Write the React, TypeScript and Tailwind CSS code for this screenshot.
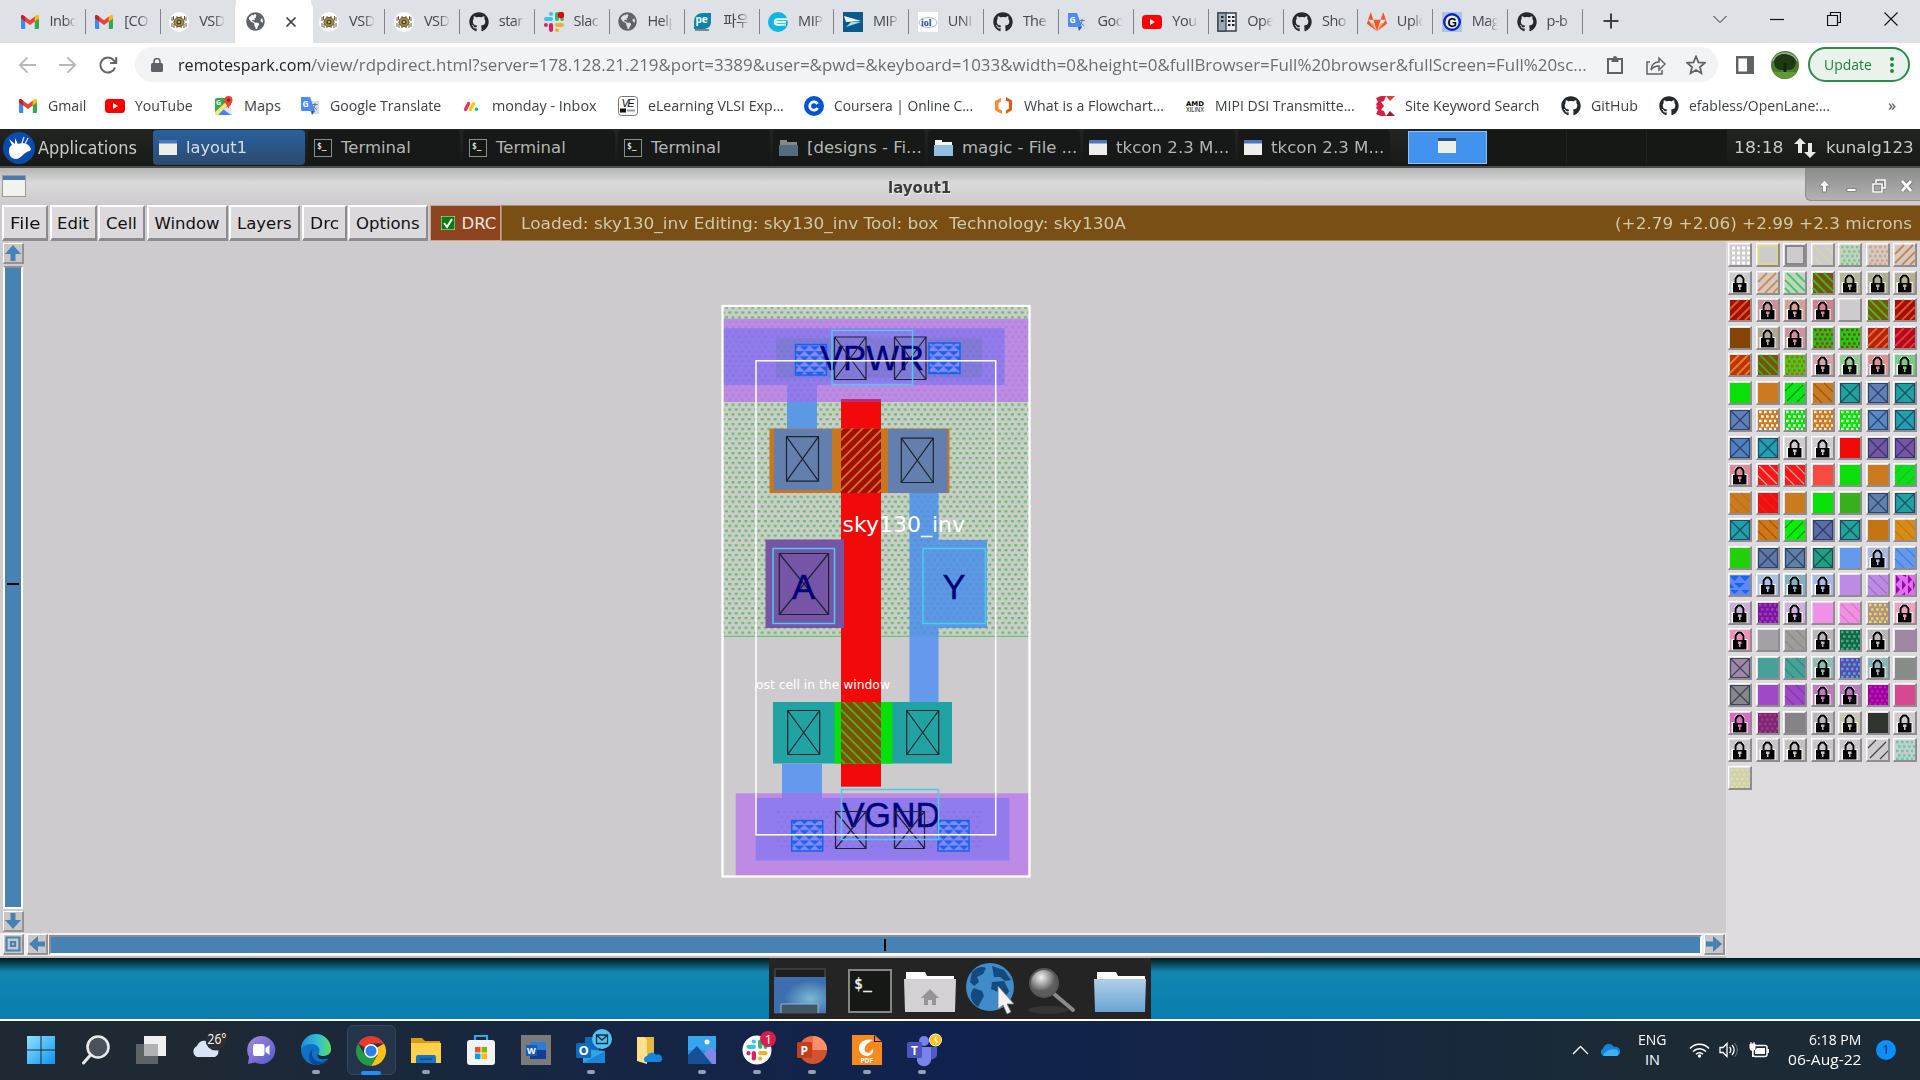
import React, { useLayoutEffect, useRef, useState } from "react";
import { FaGithub, FaGlobeAmericas, FaGitlab } from "react-icons/fa";

const UI = "font-['Open_Sans','Noto_Sans_CJK_KR',sans-serif]";
const DJ = "font-['DejaVu_Sans',sans-serif]";

/* Text squeezed or stretched horizontally to fill the width of its box. */
function Fit({ children, className = "" }: { children: string; className?: string }) {
  const box = useRef<HTMLSpanElement>(null);
  const ref = useRef<HTMLSpanElement>(null);
  const [k, setK] = useState(1);
  useLayoutEffect(() => {
    if (box.current && ref.current) setK(box.current.clientWidth / ref.current.offsetWidth);
  }, [children]);
  return (
    <span ref={box} className={"block shrink-0 whitespace-pre " + className}>
      <span ref={ref} className="inline-block origin-left" style={{ transform: `scaleX(${k})` }}>
        {children}
      </span>
    </span>
  );
}

function Svg({ children, c = "size-5", vb = "0 0 20 20" }: { children: React.ReactNode; c?: string; vb?: string }) {
  return (
    <svg viewBox={vb} className={"block shrink-0 " + c}>
      {children}
    </svg>
  );
}

const slackPaths = (
  <>
    <g fill="#36c5f0"><rect x="0" y="5" width="9" height="4" rx="2" /><rect x="5" y="0" width="4" height="3.800" rx="1.900" /></g>
    <g fill="#2eb67d"><rect x="11" y="0" width="4" height="9" rx="2" /><rect x="16.2" y="5" width="3.8" height="4" rx="1.9" /></g>
    <g fill="#ecb22e"><rect x="11" y="11" width="9" height="4" rx="2" /><rect x="11" y="16.2" width="4" height="3.8" rx="1.9" /></g>
    <g fill="#e01e5a"><rect x="5" y="11" width="4" height="9" rx="2" /><rect x="0" y="11" width="3.8" height="4" rx="1.9" /></g>
  </>
);

function Ico({ n }: { n: string }) {
  switch (n) {
    case "gmail":
      return (
        <Svg>
          <path d="M1 5v11a1.200 1.200 0 0 0 1.200 1H5.200V8z" fill="#4285f4" />
          <path d="M19 5v11a1.200 1.200 0 0 1-1.200 1H14.800V8z" fill="#34a853" />
          <path d="M14.800 4.600 17 3.100c1-.6 2 .2 2 1.300v2L14.800 9.500z" fill="#fbbc04" />
          <path d="M1 6.400V4.400c0-1.200 1.200-1.900 2.100-1.200L10 8.200l4.800-3.600v4.900L10 13.100 5.200 9.500z" fill="#ea4335" />
          <path d="M1 6.400V4.400c0-1.200 1.200-1.900 2.100-1.200l2.100 1.500v4.800z" fill="#c5221f" />
        </Svg>
      );
    case "vsd":
      return (
        <Svg>
          <circle cx="10" cy="10" r="10" fill="#fff" />
          <g stroke="#6b5a3a" strokeWidth="1"><path d="M3 5v4M4.500 4v4M17 5v4M15.500 4v4M3 11v4M5 12v4M17 11v4M15 12v4M8 4v12M12 4v12" /></g>
          <ellipse cx="10" cy="10" rx="5" ry="4.500" fill="#c88a35" stroke="#5a482c" />
          <circle cx="10" cy="10" r="2.600" fill="#1e5b50" />
          <circle cx="10" cy="10" r="1.100" fill="#ffd24a" />
        </Svg>
      );
    case "globe":
      return <FaGlobeAmericas className="size-[19px] shrink-0 text-[#5f6368]" />;
    case "github":
      return <FaGithub className="size-5 shrink-0 text-[#24292f]" />;
    case "slack":
      return <Svg>{slackPaths}<circle cx="17" cy="3" r="3.300" fill="#eb0000" /></Svg>;
    case "pe":
      return (
        <Svg>
          <path d="M1 10C1 4 5 1 10 1h8v9c0 5-4 7-8 7H1z" fill="#0b86a8" />
          <text x="2.500" y="11" fontSize="10" fontWeight="700" fill="#fff" fontFamily="Open Sans">pe</text>
          <path d="M2 18h14" stroke="#666" strokeWidth="1.500" />
        </Svg>
      );
    case "e":
      return <Svg><circle cx="10" cy="10" r="10" fill="#12b5e0" /><path d="M20 7.200H9.500a2.800 2.800 0 0 0 0 5.600H18M6 10h12" stroke="#dff" strokeWidth="2" fill="none" /></Svg>;
    case "mip":
      return <Svg><rect width="20" height="20" fill="#0b5a8e" /><path d="M1 4 18 9 3 10z" fill="#fff" /><path d="m3 15 15-5-10 0z" fill="#9fe0f5" /></Svg>;
    case "iol":
      return (
        <Svg><rect width="20" height="20" fill="#fff" /><ellipse cx="10" cy="10.500" rx="9" ry="5" fill="none" stroke="#9db6dd" /><text x="3" y="14" fontSize="10" fontFamily="Liberation Serif" fontWeight="700" fill="#2b4a9b">iol</text></Svg>
      );
    case "trans":
      return (
        <Svg>
          <path d="M7 5h11a1 1 0 0 1 1 1v11a1 1 0 0 1-1 1H11z" fill="#dadce0" />
          <path d="M1 1h9l5 14H2.500A1.500 1.500 0 0 1 1 13.500z" fill="#4c8bf5" />
          <path d="m11 15h4l-3 4z" fill="#2a56c6" />
          <text x="2.500" y="11" fontSize="8.500" fontWeight="700" fill="#fff" fontFamily="Open Sans">G</text>
          <path d="M12.500 8.500h5M15 7v1.500c0 2-1 4-2.500 5M13.500 10c.5 1.500 2 3 3.500 3.500" stroke="#607d8b" fill="none" />
        </Svg>
      );
    case "yt":
      return <Svg><rect y="3" width="20" height="14" rx="3.500" fill="#f00" /><path d="m8 7 5 3-5 3z" fill="#fff" /></Svg>;
    case "ope":
      return (
        <Svg><rect x="1" y="1" width="18" height="18" fill="#e8eef2" stroke="#3e4a54" strokeWidth="1.600" /><rect x="1" y="1" width="8" height="18" fill="#9aa9b3" stroke="#3e4a54" strokeWidth="1.400" /><path d="M4 5h2.500M4 9h2.500M11 5h2.500M15 5h2.500M11 9h2.500M15 9h2.500M11 13h2.500M15 13h2.500" stroke="#222" strokeWidth="2" /></Svg>
      );
    case "gitlab":
      return (
        <div className="relative shrink-0">
          <FaGitlab className="size-5 text-[#f0562b]" />
          <Svg c="absolute left-0 top-0 size-5"><path d="M2.500 11 10 18l7.500-7-3.500 0-4 7-4-7z" fill="#fc9a2a" opacity=".75" /></Svg>
        </div>
      );
    case "g":
      return <Svg><rect width="20" height="20" fill="#a8c6e0" /><circle cx="10" cy="10" r="7.800" fill="#e8eef8" stroke="#1020c8" strokeWidth="2.400" /><text x="5.500" y="14.500" fontSize="12" fontWeight="700" fontFamily="Liberation Sans" fill="#000">G</text></Svg>;
    case "maps":
      return (
        <Svg>
          <rect x="1" y="2" width="16" height="17" rx="2" fill="#34a853" /><path d="m1 19 9-10 8 10z" fill="#4285f4" /><path d="M1 16 14 4l2 3L4 19H1z" fill="#fbe27a" /><path d="m9 13 8 6V9z" fill="#dfe3e8" />
          <path d="M14.500 0a4 4 0 0 0-4 4c0 3.500 3 4.500 4 9 1-4.500 4-5.500 4-9a4 4 0 0 0-4-4z" fill="#ea4335" /><circle cx="14.500" cy="4" r="1.500" fill="#8a1d14" />
          <text x="2" y="8.500" fontSize="7" fontWeight="700" fill="#fff" fontFamily="Open Sans">G</text>
        </Svg>
      );
    case "monday":
      return <Svg><path d="m3.500 13.500 3-6" stroke="#fb275d" strokeWidth="3.200" strokeLinecap="round" /><path d="m8.500 13.500 3-6" stroke="#fc0" strokeWidth="3.200" strokeLinecap="round" /><circle cx="14.500" cy="13.300" r="1.800" fill="#00ca72" /></Svg>;
    case "le":
      return <Svg><rect x=".5" y=".5" width="19" height="19" rx="3" fill="#fff" stroke="#777" /><text x="3.500" y="11" fontSize="11" fontStyle="italic" fontFamily="Liberation Sans" fill="#111" textLength="13">VE</text><rect x="2" y="12.500" width="6" height="4" fill="#111" /><path d="M9 14.500h8" stroke="#999" strokeWidth="2" /></Svg>;
    case "coursera":
      return <Svg><circle cx="10" cy="10" r="10" fill="#0056d2" /><path d="M13.600 8a4.200 4.200 0 1 0 0 4" stroke="#fff" strokeWidth="2.800" fill="none" /></Svg>;
    case "flow":
      return <Svg><path d="M7 2 1 5v9l3 2 4 2v-3.500l-3.500-2V7L7 5.500z" fill="#f9892b" /><path d="m12 1 6 3.500V14l-6 4v-3.500l3-2V6l-3-1.500z" fill="#e8590c" /></Svg>;
    case "amd":
      return <Svg><text x="1" y="9.500" fontSize="6.500" fontWeight="700" fontFamily="DejaVu Sans" textLength="18" lengthAdjust="spacingAndGlyphs">AMD</text><text x="1" y="16" fontSize="7" fontFamily="Liberation Sans" textLength="18" lengthAdjust="spacingAndGlyphs">XILINX</text></Svg>;
    case "site":
      return <Svg><path d="M1 2 6 0h5L9 5 6 6l3 4-3 4 3 1 2 5H6l-5-2 2-4-2-2 1-2-1-2 2-2z" fill="#d7203f" /><path d="M11 20h9l-5-5z" fill="#a3162f" /><path d="m11 0h9l-5 5z" fill="#ee3a33" /></Svg>;
    default:
      return null;
  }
}

const tabs: [string, string][] = [
  ["gmail", "Inbo"], ["gmail", "[CO"], ["vsd", "VSD"], ["globe", "*"], ["vsd", "VSD"], ["vsd", "VSD"], ["github", "star"],
  ["slack", "Slac"], ["globe", "Help"], ["pe", "파우"], ["e", "MIP"], ["mip", "MIP"], ["iol", "UNI"], ["github", "The"],
  ["trans", "Goo"], ["yt", "You"], ["ope", "Ope"], ["github", "Sho"], ["gitlab", "Uplo"], ["g", "Mag"], ["github", "p-b"],
];

function TabStrip() {
  return (
    <div className="flex h-[43px] bg-[#dee1e6] pl-[11px]">
      {tabs.map(([ic, t], i) =>
        t === "*" ? (
          <div key={i} className="relative flex h-[43px] w-[75px] shrink-0 items-center bg-white pl-[10px]">
            <div className="absolute -left-px top-0 h-[43px] w-[78px] rounded-t-[9px] bg-white" />
            <div className="relative flex items-center">
              <Ico n={ic} />
              <Svg c="ml-5 size-3" vb="0 0 12 12"><path d="m1.500 1.500 9 9m0-9-9 9" stroke="#3c4043" strokeWidth="1.700" /></Svg>
            </div>
          </div>
        ) : (
          <div key={i} className="flex h-[43px] w-[74.850px] shrink-0 items-center pl-[8.500px]">
            <Ico n={ic} />
            <div className="ml-[10px] w-[26px] overflow-hidden whitespace-nowrap pb-px text-[14.500px] leading-5 tracking-[-0.500px] text-[#45494d] [mask-image:linear-gradient(to_right,#000_60%,transparent)]">
              {t}
            </div>
            {i !== 2 && <div className="ml-auto h-[25px] w-px bg-[#808489]" />}
          </div>
        ),
      )}
      <Svg c="mt-[13px] ml-[20px] size-4" vb="0 0 16 16"><path d="M8 .5v15M.5 8h15" stroke="#3c4043" strokeWidth="2" /></Svg>
      <div className="ml-auto flex h-[37px] items-center gap-[43px] pr-[22px]">
        <Svg c="size-[14px]" vb="0 0 14 14"><path d="m.5 4 6.500 6.500L13.500 4" fill="none" stroke="#222" /></Svg>
        <Svg c="size-[14px]" vb="0 0 14 14"><path d="M0 7.500h14" stroke="#111" strokeWidth="1.200" /></Svg>
        <Svg c="size-[14px]" vb="0 0 14 14"><path d="M.5 3.500h10v10H.5zM3.500 3.500v-3h10v10h-3" fill="none" stroke="#111" strokeWidth="1.200" /></Svg>
        <Svg c="size-[14px]" vb="0 0 14 14"><path d="m.5.5 13 13m0-13-13 13" stroke="#111" strokeWidth="1.100" /></Svg>
      </div>
    </div>
  );
}

function AddressBar() {
  return (
    <div className="flex h-[43px] items-center bg-white pl-[18px]">
      <Svg c="h-5 w-[19px]"><path d="M19 10H2m8-8-8 8 8 8" fill="none" stroke="#b6b8bb" strokeWidth="2" /></Svg>
      <Svg c="ml-[21px] h-5 w-[19px]"><path d="M1 10h17m-8-8 8 8-8 8" fill="none" stroke="#b6b8bb" strokeWidth="2" /></Svg>
      <Svg c="ml-[21px] size-5"><path d="M17 12.500A7.500 7.500 0 1 1 15.500 5l2 2M18.200 2v6h-6" fill="none" stroke="#5f6368" strokeWidth="2" /></Svg>
      <div className="ml-[17px] flex h-[35px] w-[1583px] items-center rounded-full bg-[#f1f3f4] pl-4">
        <Svg c="h-[14px] w-3" vb="0 0 12 14"><rect y="5" width="12" height="9" rx="1.500" fill="#5f6368" /><path d="M3 6V3.500a3 3 0 0 1 6 0V6" fill="none" stroke="#5f6368" strokeWidth="1.600" /></Svg>
        <Fit className="ml-[15px] w-[133px] text-[16.500px] leading-6 text-[#202124]">remotespark.com</Fit>
        <Fit className="w-[1276px] text-[16.500px] leading-6 text-[#6a6e73]">/view/rdpdirect.html?server=178.128.21.219&port=3389&user=&pwd=&keyboard=1033&width=0&height=0&fullBrowser=Full%20browser&fullScreen=Full%20sc...</Fit>
        <Svg c="ml-[20px] h-[18px] w-4" vb="0 0 16 18"><path d="M1 3h14v14H1z" fill="none" stroke="#5f6368" strokeWidth="2" /><path d="M4.500 2h7v4h-7z" fill="#5f6368" /><circle cx="8" cy="2" r="2" fill="#5f6368" /></Svg>
        <Svg c="ml-[23px] size-[20px]"><path d="M4 7H1v12h15v-4M5 15c.5-5 3-8 8-8V3l6 6-6 6v-4c-4 0-6 1-8 4z" fill="none" stroke="#5f6368" strokeWidth="1.500" /></Svg>
        <Svg c="ml-[20px] size-[20px]"><path d="m10 1.500 2.500 5.800 6.200.6-4.700 4.100 1.400 6.200L10 15l-5.400 3.200L6 12 1.300 7.900l6.200-.6z" fill="none" stroke="#5f6368" strokeWidth="1.800" /></Svg>
      </div>
      <Svg c="ml-[18px] h-[18px] w-[18px]" vb="0 0 18 18"><path d="M1.200 1.200h15.600v15.600H1.200z" fill="none" stroke="#5f6368" strokeWidth="2.400" /><path d="M11 1h6v16h-6z" fill="#5f6368" /></Svg>
      <Svg c="ml-[17px] size-7" vb="0 0 28 28">
        <circle cx="14" cy="14" r="14" fill="#4b7a2c" /><path d="M1 10a14 14 0 0 1 26 0z" fill="#8fae9a" /><path d="M3 10c1-4 5-7 10-7s10 2 12 7c0 6-3 9-8 9H9c-4-1-6-4-6-9z" fill="#1d3a14" /><path d="M14 12v9" stroke="#14240d" strokeWidth="3" /><path d="M2 21h24a14 14 0 0 1-24 0z" fill="#5f9a35" />
      </Svg>
      <div className="ml-[9px] flex h-[35px] w-[102px] items-center rounded-full border-2 border-[#2c8a4b] bg-[#e9f3ec] pl-[14px]">
        <Fit className="w-12 text-[14.500px] leading-5 text-[#1e7e3c]">Update</Fit>
        <Svg c="ml-[17px] h-4 w-[6px]" vb="0 0 6 16"><g fill="#1e8e3e"><circle cx="3" cy="2" r="2" /><circle cx="3" cy="8" r="2" /><circle cx="3" cy="14" r="2" /></g></Svg>
      </div>
    </div>
  );
}

const marks: [string, string, string, string][] = [
  ["gmail", "Gmail", "w-[87px]", "w-[38px]"],
  ["yt", "YouTube", "w-[109px]", "w-[58px]"],
  ["maps", "Maps", "w-[86px]", "w-[37px]"],
  ["trans", "Google Translate", "w-[162px]", "w-[111px]"],
  ["monday", "monday - Inbox", "w-[156px]", "w-[105px]"],
  ["le", "eLearning VLSI Exp...", "w-[186px]", "w-[136px]"],
  ["coursera", "Coursera | Online C...", "w-[190px]", "w-[139px]"],
  ["flow", "What is a Flowchart...", "w-[191px]", "w-[140px]"],
  ["amd", "MIPI DSI Transmitte...", "w-[190px]", "w-[140px]"],
  ["site", "Site Keyword Search", "w-[186px]", "w-[134px]"],
  ["github", "GitHub", "w-[98px]", "w-[47px]"],
  ["github", "efabless/OpenLane:...", "w-[200px]", "w-[141px]"],
];

function Bookmarks() {
  return (
    <div className="flex h-[43px] items-center bg-white pb-[4px] pl-[18px]">
      {marks.map(([ic, t, w, tw], i) => (
        <div key={i} className={"flex shrink-0 items-center gap-[10px] " + w}>
          <Ico n={ic} />
          <Fit className={"text-[14.500px] leading-5 text-[#3c4043] " + tw}>{t}</Fit>
        </div>
      ))}
      <span className="ml-auto mr-6 pb-0.5 text-[16px] leading-5 text-[#3c4043]">»</span>
    </div>
  );
}

function TaskIcon({ k }: { k: string }) {
  if (k === "term")
    return <Svg c="h-[18px] w-[18px]" vb="0 0 18 18"><rect x=".5" y=".5" width="17" height="17" fill="#151715" stroke="#8b8e8b" /><text x="3" y="9.500" fontSize="8" fontWeight="700" fontFamily="DejaVu Sans Mono" fill="#ddd">$_</text></Svg>;
  if (k === "folder" || k === "dim")
    return (
      <Svg c={"h-[16px] w-[19px] " + (k === "dim" ? "opacity-50" : "")} vb="0 0 19 16"><path d="M1 0h7v2h10v5H1z" fill="#f4f4f4" /><path d="M0 5h19v11H0z" fill="#8fbfe3" /></Svg>
    );
  return <Svg c="h-[15px] w-[18px]" vb="0 0 18 15"><rect width="18" height="15" fill="#efefea" /><rect width="18" height="3.500" fill="#4a78b8" /></Svg>;
}

const tasks: [string, string, string][] = [
  ["win", "layout1", "w-[61px]"], ["term", "Terminal", "w-[70px]"], ["term", "Terminal", "w-[70px]"], ["term", "Terminal", "w-[70px]"],
  ["dim", "[designs - Fi...", "w-[115px]"], ["folder", "magic - File ...", "w-[115px]"], ["win", "tkcon 2.3 M...", "w-[113px]"], ["win", "tkcon 2.3 M...", "w-[113px]"],
];

function Panel() {
  return (
    <div className={"flex h-[39px] items-center border-b-2 border-[#4b4d4b] bg-gradient-to-b from-[#232523] to-[#171917] text-[#b4b6b3] " + DJ}>
      <Svg c="ml-[3px] size-8" vb="0 0 32 32">
        <circle cx="16" cy="16" r="16" fill="#0a4bb0" />
        <path d="M6 19c0-3 1-5 3-6l-3-6 6 5 0-6 3 6 4-1c5 0 8 3 9 6l-1 2c-5 0-9 8-14 8-5 0-7-4-7-8z" fill="#fff" /><path d="m19 11 2-6m1 7 3-6" stroke="#dfe8f8" strokeWidth="1.300" />
      </Svg>
      <Fit className="ml-[3px] w-[99px] text-[17px] leading-6 text-[#c9cbc8]">Applications</Fit>
      <div className="ml-[16px] flex w-[1243px]">
        {tasks.map(([k, t, w], i) => (
          <div key={i} className={"mr-[3px] flex h-[35px] w-[152px] shrink-0 items-center gap-[9px] rounded-sm pl-[6px] " + (i === 0 ? "bg-gradient-to-b from-[#28619f] to-[#2c4a6e] text-[#d5dde6]" : "bg-[#171918]")}>
            <TaskIcon k={k} />
            <Fit className={"text-[16.500px] leading-6 " + w}>{t}</Fit>
          </div>
        ))}
      </div>
      <div className="ml-[12px] flex h-[33px] w-[79px] items-center justify-center border border-[#8fc0f5] bg-[#4193ee] pb-1 pr-0.5">
        <Svg c="h-[15px] w-[18px]" vb="0 0 18 15"><rect width="18" height="15" fill="#efefea" /><rect width="18" height="3" fill="#2c4a78" /></Svg>
      </div>
      <div className="flex gap-px bg-[#202220]">
        <div className="h-[35px] w-[79px] bg-[#161816]" />
        <div className="h-[35px] w-[79px] bg-[#161816]" />
        <div className="h-[35px] w-[80px] bg-[#161816]" />
      </div>
      <Fit className="ml-[7px] w-[50px] text-[16.500px] leading-6 text-[#c9cbc8]">18:18</Fit>
      <Svg c="ml-[10px] h-5 w-[22px]" vb="0 0 22 20"><path d="M6 0 0 6h4v9h4V6h4zM16 20l6-6h-4V5h-4v9h-4z" fill="#e8e8e8" /></Svg>
      <Fit className="ml-[10px] w-[88px] text-[16.500px] leading-6 text-[#c9cbc8]">kunalg123</Fit>
    </div>
  );
}

function TitleBar() {
  return (
    <div className={"grid h-[37px] grid-cols-3 bg-gradient-to-b from-[#b4b4b4] via-[#dbdadb] via-40% to-[#cdcbcd] " + DJ}>
      <Svg c="mt-[7px] ml-[2px] h-[22px] w-6" vb="0 0 24 22"><rect x=".5" y=".5" width="23" height="21" fill="#f2f2ee" stroke="#9a9a9a" /><rect x="1" y="1" width="22" height="4" fill="#4a78b0" /></Svg>
      <div className="flex justify-center">
        <Fit className="mt-[8px] -ml-[82px] w-[63px] text-[15.500px] font-bold leading-6 text-[#3c3c3c] [text-shadow:1px_1px_0_#eee]">layout1</Fit>
      </div>
      <div className="ml-auto flex h-[33px] w-[115px] items-center gap-[14px] rounded-bl-md border-b border-l border-[#8d8d8d] bg-gradient-to-b from-[#8b8b8b] to-[#b2b2b2] pl-3 pt-1">
        <Svg c="h-[14px] w-[13px]" vb="0 0 13 14"><path d="M6.500 1 1 7h3.500v6h4V7H12z" fill="#fff" stroke="#777" strokeWidth=".8" /></Svg>
        <Svg c="h-[14px] w-[13px]" vb="0 0 13 14"><rect x="2" y="9.500" width="9" height="3" fill="#fff" stroke="#777" strokeWidth=".8" /></Svg>
        <Svg c="h-[14px] w-[14px]" vb="0 0 14 14"><path d="M4 4V1h9v8h-3M1 5h9v8H1z" fill="none" stroke="#777" strokeWidth="3" /><path d="M4 4V1h9v8h-3M1 5h9v8H1z" fill="none" stroke="#fff" strokeWidth="1.600" /></Svg>
        <Svg c="h-[14px] w-[13px]" vb="0 0 13 14"><path d="m2 2 9 10m0-10-9 10" stroke="#777" strokeWidth="4.500" /><path d="m2 2 9 10m0-10-9 10" stroke="#fff" strokeWidth="2.800" /></Svg>
      </div>
    </div>
  );
}

const menus: [string, string, string][] = [
  ["File", "w-[46px]", "w-[31px]"], ["Edit", "w-[47px]", "w-[32px]"], ["Cell", "w-[47px]", "w-[31px]"], ["Window", "w-[81px]", "w-[65px]"],
  ["Layers", "w-[71px]", "w-[55px]"], ["Drc", "w-[45px]", "w-[29px]"], ["Options", "w-[80px]", "w-[64px]"],
];

function MenuBar() {
  return (
    <div className={"flex h-[36px] gap-[1.500px] bg-[#cdcbcd] pl-[2px] text-[16.500px] leading-6 " + DJ}>
      {menus.map(([t, w, tw]) => (
        <div key={t} className={"flex items-center justify-center border-b-[3px] border-l-2 border-r-2 border-t-2 border-b-[#8d8b8d] border-l-white border-r-[#8d8b8d] border-t-white bg-[#dbd9db] pt-[2px] text-[#111] " + w}>
          <Fit className={tw}>{t}</Fit>
        </div>
      ))}
      <div className="flex w-[71px] items-center border border-[#c9a58f] bg-[#8f4421] pl-[10px] text-[#f0e4da]">
        <Svg c="size-[14px]" vb="0 0 14 14"><rect width="14" height="14" fill="#0b7a12" stroke="#cfc" strokeWidth="1" /><path d="m3 7 3 4 5-8" fill="none" stroke="#fff" strokeWidth="2" /></Svg>
        <Fit className="ml-[7px] mt-px w-[35px]">DRC</Fit>
      </div>
      <div className="-ml-[1px] flex grow items-center justify-between border-b border-l border-t border-[#a78a60] bg-[#7a4f15] pl-[19px] pr-[8px] pt-px text-[#cfcaa8]">
        <Fit className="w-[605px]">{"Loaded: sky130_inv Editing: sky130_inv Tool: box  Technology: sky130A"}</Fit>
        <Fit className="w-[297px]">(+2.79 +2.06) +2.99 +2.3 microns</Fit>
      </div>
    </div>
  );
}

const rot = ["rotate-0", "rotate-180", "-rotate-90", "rotate-90"];
function Arrow({ d }: { d: number }) {
  return (
    <div className="size-[21px] shrink-0 border-b-2 border-l border-r-2 border-t border-b-[#939193] border-l-white border-r-[#939193] border-t-white bg-[#c9c7c5]">
      <Svg c={"h-[18px] w-[18px] " + rot[d]} vb="0 0 18 18"><path d="M9 1 1 10h5.500v7h5v-7H17z" fill="#4682b4" /></Svg>
    </div>
  );
}

function XBox({ x, y, w, h, c = "#1c2430" }: { x: number; y: number; w: number; h: number; c?: string }) {
  return <path d={`M${x} ${y}h${w}v${h}h${-w}zl${w} ${h}m0 ${-h}l${-w} ${h}`} fill="none" stroke={c} strokeWidth="1.200" />;
}

function Via({ x, y }: { x: number; y: number }) {
  return <rect x={x} y={y} width="31" height="30.500" fill="url(#tri)" stroke="#1464f4" strokeWidth="1.500" />;
}

/* Inverter cell: the view box starts at the canvas' own top left corner. */
function Cell() {
  return (
    <svg viewBox="721 304 311 575" className="ml-[694.500px] mt-[62.500px] block h-[575px] w-[311px]">
      <defs>
        <pattern id="well" width="6.500" height="9.700" patternUnits="userSpaceOnUse"><rect x=".3" y="1" width="2.900" height="2.300" fill="#5cc45c" /><rect x="3.500" y="5.850" width="2.900" height="2.300" fill="#5cc45c" /></pattern>
        <pattern id="wellSoft" width="6.500" height="9.700" patternUnits="userSpaceOnUse"><rect x=".3" y="1" width="2.900" height="2.300" fill="#5a5a98" opacity=".16" /><rect x="3.500" y="5.850" width="2.900" height="2.300" fill="#5a5a98" opacity=".16" /></pattern>
        <pattern id="tri" x="1" width="10.300" height="10.300" patternUnits="userSpaceOnUse"><rect width="10.300" height="10.300" fill="#8b86ee" /><path d="M0 1h10.300L5.100 5.500zM-5 6.200h10L0 10.500zM5.300 6.200h10l-5 4.300z" fill="#1464f4" /></pattern>
        <pattern id="pg" width="7.070" height="7.070" patternUnits="userSpaceOnUse" patternTransform="rotate(45)"><rect width="7.070" height="7.070" fill="#a30e05" /><rect width="1.800" height="7.070" fill="#cc7b20" /></pattern>
        <pattern id="ng" width="7.070" height="7.070" patternUnits="userSpaceOnUse" patternTransform="rotate(-45)"><rect width="7.070" height="7.070" fill="#844d08" /><rect width="1.800" height="7.070" fill="#38c018" /></pattern>
      </defs>
      <rect x="722" y="305" width="307" height="331.500" fill="url(#well)" />
      <path d="M722 636.300h307" stroke="#5cc45c" />
      <rect x="723" y="318.700" width="305.500" height="83.300" fill="#bd8be4" />
      <rect x="787" y="400" width="30" height="29" fill="#6499ee" />
      <path d="M723 328.300h281.500v56.400H817V402h-30v-17.300h-64z" fill="#917bed" />
      <rect x="776" y="338" width="206" height="40" fill="#827ad8" />
      <rect x="723" y="318.700" width="305.500" height="83.300" fill="url(#wellSoft)" />
      <path d="M909.500 493h29v47H987v88h-48.500v74h-29z" fill="#6499ee" />
      <path d="M909.500 493h29v47H987v88h-48.500v8.500h-29zM787 402h30v27h-30z" fill="#4a9ad0" opacity=".3" />
      <path d="M909.500 493h29v47H987v88h-48.500v8.500h-29z" fill="url(#wellSoft)" />
      <rect x="841" y="399" width="40" height="387.700" fill="#f20a0a" />
      <rect x="841" y="399" width="40" height="3" fill="#c02878" />
      <rect x="769.500" y="428.500" width="180" height="64.500" fill="#c87620" />
      <rect x="774" y="429" width="58" height="61" fill="#637fae" />
      <rect x="888" y="429" width="59.500" height="64" fill="#637fae" />
      <rect x="841" y="428.500" width="40" height="64.500" fill="url(#pg)" />
      <XBox x={786.500} y={436.700} w={32} h={44.500} />
      <XBox x={901.300} y={438.200} w={32} h={44.300} />
      <rect x="765.500" y="539.500" width="78.500" height="88.500" fill="#7755a6" />
      <XBox x={779.300} y={553.500} w={49.300} h={61} />
      <g fill="none" stroke="#48cdee" strokeWidth="1.500">
        <rect x="773" y="548.500" width="61.500" height="75" />
        <rect x="923" y="548.500" width="62.500" height="75" />
      </g>
      <rect x="773" y="702" width="179" height="61.500" fill="#20a3a2" />
      <rect x="834.500" y="702" width="58" height="61.500" fill="#08e00c" />
      <rect x="841" y="702" width="40" height="61.500" fill="url(#ng)" />
      <XBox x={787.700} y={710.500} w={32} h={44} />
      <XBox x={906.700} y={710.500} w={32} h={44} />
      <rect x="782" y="763.500" width="40" height="35" fill="#6499ee" />
      <rect x="735.700" y="793.300" width="293" height="83" fill="#bd8be6" />
      <rect x="755.700" y="798" width="253.800" height="62.500" fill="#917bed" />
      <rect x="782" y="793" width="40" height="5" fill="#917bed" />
      <rect x="775.500" y="810" width="206" height="38" fill="url(#wellSoft)" />
      <Via x={795.500} y={344.500} /><Via x={929} y={343} /><Via x={791.700} y={820.500} /><Via x={938} y={820.500} />
      <g fontFamily="Liberation Sans" fontSize="34.500" fill="#00007c" stroke="#00007c" strokeWidth=".4">
        <text x="820" y="370" textLength="104" lengthAdjust="spacingAndGlyphs">VPWR</text>
        <text x="842" y="827" textLength="98" lengthAdjust="spacingAndGlyphs">VGND</text>
        <text x="792" y="599.300">A</text>
        <text x="942.500" y="599.300">Y</text>
      </g>
      <XBox x={834.500} y={337} w={31.500} h={42.500} /><XBox x={894.500} y={337} w={31.500} h={42.500} />
      <XBox x={835.500} y={811.500} w={30.500} h={37} /><XBox x={894.500} y={811.500} w={30} h={37} />
      <g fill="none" stroke="#48cdee" strokeWidth="1.500">
        <rect x="832" y="330.500" width="80.500" height="54" />
        <rect x="841.500" y="789.500" width="97" height="50" />
      </g>
      <rect x="756" y="360.800" width="239.700" height="474" fill="none" stroke="#fff" strokeWidth="1.500" />
      <rect x="722.500" y="306" width="307" height="570.500" fill="none" stroke="#fff" strokeWidth="2.300" />
      <g fontFamily="DejaVu Sans" fill="#fff">
        <text x="842.500" y="531.500" fontSize="22" textLength="122.500" lengthAdjust="spacingAndGlyphs">sky130_inv</text>
        <text x="756" y="689" fontSize="12.500" textLength="134" lengthAdjust="spacingAndGlyphs">ost cell in the window</text>
      </g>
    </svg>
  );
}

/* Layer swatches, "kind:base:ink". L lock, S solid, X contact, / and \ hatches, - and _ sparse hatches, D dots, T and V triangles, B border, G grid. */
const G = "#cdcbcd";
const swatches: string[] = [
  `G:${G}:#fff`, `B:${G}:#dddc70`, `B:${G}:#77757a`, `_:${G}:#dbd990`, `D:${G}:#66d870`, `D:${G}:#e0a070`, `/:${G}:#d88038`,
  `L:${G}:#dddc70`, `/:${G}:#e08840`, `\\:${G}:#20e040`, "\\:#844d10:#20c820", "L:#b8b898", "L:#b0b090", "L:#b8b090",
  "/:#a80c08:#d06818", "L:#d09098", "L:#d8a090", "L:#d08090", `S:${G}`, "\\:#885010:#20d018", "/:#a80c08:#d86020",
  "S:#844404", "L:#b0a890", "L:#d090a0", "D:#18c818:#b83010", "D:#10d810:#a03810", "/:#b82010:#e07020", "/:#b80820:#e04030",
  "/:#c03408:#e08820", "\\:#884c10:#20b818", "D:#40d010:#b06020", "L:#d8a0a8", "L:#90d090", "L:#e09090", "L:#70d080",
  "S:#08e008", "S:#cc7a20", "-:#08e818:#188818", "_:#cc7a20:#985818", "X:#20a3a0", "X:#6080b8", "X:#20a3a0",
  "X:#6080b8", "D:#cc7a20:#fff", "D:#08e008:#fff", "D:#cc7a20:#f4e8d8", "D:#08e008:#d8ffd8", "X:#5888c8", "X:#20a0b0",
  "X:#5080c0", "X:#20a0b0", `L:${G}`, `L:${G}`, "S:#f20a0a", "X:#7854a8", "X:#7854a8",
  "L:#e08898", "_:#f81818:#f0b0b0", "_:#f81818:#f0a0a0", "S:#f84a40", "S:#08e008", "S:#cc7a20", "-:#08e018:#30b820",
  "_:#cc7a20:#b87020", "_:#f01010:#d83020", "S:#cc7a20", "S:#08e008", "S:#38b01c", "X:#6080b0", "X:#20a3a0",
  "X:#20a0a8", "_:#d07818:#985818", "-:#08f008:#188818", "X:#5c6ca8", "X:#20a398", "S:#c47414", "_:#d88c18:#c07810",
  "S:#20d008", "X:#6078a8", "X:#6080a8", "X:#20a080", "S:#6499ee", "L:#a8b8e0", "_:#6499ee:#4880d0",
  "T:#6088f0:#1464f4", "L:#a8c0e8", "L:#80b0c8", "L:#a8b8e8", "S:#bd8be6", "_:#bd8be6:#a070c8", "V:#e070f0:#9808b0",
  "L:#c8b0d8", "D:#7818a0:#a838c0", "L:#d0b0e0", "S:#f090e8", "_:#f090e0:#d878c8", "D:#b09090:#e8e040", "L:#f0a0b8",
  "L:#f090b8", "S:#a3a1a5", "_:#a09c9c:#8c8888", "L:#b8b6b8", "D:#106848:#48a880", "L:#b8b6b8", "S:#a088a4",
  "X:#a088a4", "S:#48a098", "_:#48a098:#308880", "L:#88c0b8", "D:#5c48b8:#48b0b8", "L:#88b8b8", "S:#888c88",
  "X:#888888", "S:#a048c8", "_:#a048c8:#8038a8", "L:#c078c0", "L:#b878c0", "D:#9800a0:#c818b8", "S:#d84890",
  "L:#e068c8", "D:#802088:#984858", "S:#858385", "L:#b8b6b8", "L:#c8c8b0", "S:#303430", `L:${G}`,
  "L:#c8c6c8", "L:#c8c6c8", "L:#c8c0c0", "L:#c8c6c8", "L:#c8c6c8", `-:${G}:#46444a`, `D:${G}:#58d0a8`,
  `D:${G}:#e8e860`,
];

function Swatch({ s }: { s: string }) {
  const [k, base, ink] = s.split(":");
  return (
    <div className="size-6 border-b-2 border-l border-r-2 border-t border-b-[#8f8d8f] border-l-white border-r-[#8f8d8f] border-t-white bg-[#e4e2e4]">
      <svg viewBox="0 0 21 21" className="block size-[21px] overflow-hidden">
        <rect x="1" y="1" width="20" height="20" fill={base} />
        {k === "B" && <rect x="2" y="2" width="18" height="18" fill="none" stroke={ink} strokeWidth="1.600" />}
        {k === "G" && [4, 9, 14, 19].map((a) => <path key={a} d={`M3 ${a}h18`} stroke={ink} strokeWidth="3" strokeDasharray="3 2" />)}
        {k === "/" && <path d="M1 10 10 1M1 19 19 1M8 21 21 8M16 21l5-5" stroke={ink} strokeWidth="1.800" />}
        {k === "\\" && <path d="m12 1 9 9M3 1l18 18M1 8l13 13M1 16l5 5" stroke={ink} strokeWidth="1.800" />}
        {k === "-" && <path d="M1 9 9 1M3 19 19 3M13 20l8-8" stroke={ink} strokeWidth="1.200" />}
        {k === "_" && <path d="m12 1 9 9M2 2l18 18M1 12l9 9" stroke={ink} strokeWidth="1.200" />}
        {k === "D" && [3, 7.500, 12, 16.500, 20].map((a, i) => <path key={a} d={`M${i % 2 ? 4 : 2} ${a}h17`} stroke={ink} strokeWidth="2.300" strokeDasharray="2.600 2.400" />)}
        {k === "T" && <path d="M1 2h9L5.500 7zM11 2h10l-5 5zM5 9h11l-5.500 5zM1 9v5l4 0zM1 16h9l-4.500 4zM12 16h9l-4.500 4z" fill={ink} />}
        {k === "V" && <path d="M2 1v9l4-4.500zM2 11v9l4-4.500zM8 6v10l4-5zM14 1v9l4-4.500zM14 11v9l4-4.500zM19 6v10l2-5zM8 1l4 2V1zM8 21l3-3v3z" fill={ink} />}
        {k === "X" && <path d="M1.500 1.500h19v19h-19zl19 19m0-19-19 19" fill="none" stroke="#1b3050" strokeOpacity=".75" strokeWidth="1.200" />}
        {k === "L" && (
          <>
            <path d="M2.500 21.500V10H5V6l3-4h5l3 4v4h2.500v11.500z" fill="#fff" />
            <path d="M6.500 11V6.500l2.500-3h3l2.500 3V11" fill={base} stroke="#000" strokeWidth="2" />
            <rect x="4" y="11" width="13.500" height="9.500" fill="#000" /><path d="M9 12.500h3.500v2.500h-1v3H10v-3H9z" fill={base} />
          </>
        )}
      </svg>
    </div>
  );
}

function Magic() {
  return (
    <div className="flex h-[717px] bg-[#cdcbcd]">
      <div className="flex w-[1726px] flex-col">
        <div className="flex h-[692px]">
          <div className="flex w-[26px] flex-col items-start gap-[2px] pl-[3px] pt-[2px]">
            <Arrow d={0} />
            <div className="flex h-[643px] w-[20px] items-start justify-center border-2 border-b-white border-l-white border-r-white border-t-[#8f8d8f] bg-[#4682b4] pt-[315px]">
              <div className="h-[2px] w-3 bg-black" />
            </div>
            <Arrow d={1} />
          </div>
          <Cell />
        </div>
        <div className="flex h-[25px] items-center border-b-2 border-[#c0bebc] bg-[#efedef] pl-[3px]">
          <div className="size-[21px] border-b-2 border-l border-r-2 border-t border-b-[#939193] border-l-white border-r-[#939193] border-t-white bg-[#c9c7c5]">
            <Svg c="size-[18px]" vb="0 0 18 18"><path d="M2.500 2.500h13v13h-13zM7 7h4v4H7z" fill="none" stroke="#4682b4" strokeWidth="2.200" /></Svg>
          </div>
          <div className="ml-[3px]"><Arrow d={2} /></div>
          <div className="ml-[1px] flex h-[20px] w-[1653px] items-center justify-center border-2 border-b-white border-l-[#8f8d8f] border-r-white border-t-[#8f8d8f] bg-[#4682b4]">
            <div className="ml-[18px] h-3 w-[2px] bg-black" />
          </div>
          <div className="ml-[2px]"><Arrow d={3} /></div>
        </div>
      </div>
      <div className="w-[194px] bg-[#dddbdd] pl-[2px] pt-[2px]">
        <div className="grid auto-rows-[27.500px] grid-cols-[repeat(7,27.550px)]">
          {swatches.map((s, i) => <Swatch key={i} s={s} />)}
        </div>
      </div>
    </div>
  );
}

function Desktop() {
  return (
    <div className="flex h-[61px] justify-center bg-gradient-to-b from-[#1489b0] to-[#087db0]">
      <div className="h-3.5 flex-1 bg-gradient-to-b from-[#02161c] to-transparent" />
      <div className="flex w-[382px] items-center bg-[#232423] pl-[5px] pt-[4px]">
        <Svg c="h-[46px] w-[52px]" vb="0 0 52 46">
          <defs><radialGradient id="dk" cx=".7" cy=".6"><stop offset="0" stopColor="#7db9d6" /><stop offset="1" stopColor="#3d6fae" /></radialGradient></defs>
          <rect x="1" y="1" width="50" height="44" fill="#1c1d1c" stroke="#555" /><rect y="9" width="52" height="36" fill="url(#dk)" /><path d="M7 45V36h37v9" fill="#40576a" stroke="#8fb8d0" />
        </Svg>
        <Svg c="ml-[22px] h-[44px] w-[44px]" vb="0 0 44 44"><rect x="1" y="1" width="42" height="42" fill="#161816" stroke="#858785" strokeWidth="2" /><text x="6" y="20" fontSize="15" fontWeight="700" fontFamily="DejaVu Sans Mono" fill="#e8e8e8">$_</text></Svg>
        <Svg c="ml-[12px] h-[44px] w-[52px]" vb="0 0 52 44"><path d="M2 3h19l2 4h27v8H2z" fill="#fff" /><path d="M0 10h52l-1 33H1z" fill="#d3d1d3" /><path d="m26 20-9 9h3v7h4v-5h4v5h4v-7h3z" fill="#969496" /></Svg>
        <Svg c="ml-[10px] mt-[-3px] h-[52px] w-[52px]" vb="0 0 52 52">
          <circle cx="24" cy="24" r="24" fill="#3f8ccb" /><path d="M6 9c5-5 10-6 14-4l-3 6-6 3 2 5-5 4-4-4zM8 25l8 3 2 5-6 11C5 39 2 32 8 25zM26 3l12 4 7 10-6 1-5-4-6 0zM26 19l12-1 5 10-7 12-4-11-7-3z" fill="#154a7c" />
          <path d="M32 23v23l5-4 4 9 4-2-4-8h7z" fill="#f2f2f2" stroke="#777" strokeWidth=".8" />
        </Svg>
        <Svg c="ml-[10px] h-[46px] w-[48px]" vb="0 0 48 46"><defs><radialGradient id="mg" cx=".4" cy=".3"><stop offset="0" stopColor="#f4f4f4" /><stop offset="1" stopColor="#5c5c5c" /></radialGradient></defs><ellipse cx="20" cy="42" rx="20" ry="4" fill="#343534" /><path d="m25 25 20 17" stroke="#8a8a8a" strokeWidth="4" strokeLinecap="round" /><circle cx="16" cy="15" r="14" fill="url(#mg)" stroke="#555" strokeWidth="2" /></Svg>
        <Svg c="ml-[18px] h-[44px] w-[52px]" vb="0 0 52 44"><defs><linearGradient id="fb" x2="0" y2="1"><stop offset="0" stopColor="#b0cfe8" /><stop offset="1" stopColor="#6ba3d3" /></linearGradient></defs><path d="M3 3h19l2 4h27v8H3z" fill="#fff" /><path d="M0 10h52l-1 33H1z" fill="url(#fb)" /></Svg>
      </div>
      <div className="h-3.5 flex-1 bg-gradient-to-b from-[#02161c] to-transparent" />
    </div>
  );
}

const apps: [string, React.ReactNode, boolean][] = [
  ["start", <><defs><linearGradient id="wn" x2="1" y2="1"><stop offset="0" stopColor="#8fe3ff" /><stop offset="1" stopColor="#0f93f0" /></linearGradient></defs><path d="M1 1h13.500v13.500H1zM15.500 1H29v13.500H15.500zM1 15.500h13.500V29H1zM15.500 15.500H29V29H15.500z" fill="url(#wn)" /></>, false],
  ["search", <><circle cx="17" cy="12" r="10.500" fill="#4a5158" stroke="#e8eaec" strokeWidth="2.600" /><path d="m9.500 20-7 8" stroke="#e8eaec" strokeWidth="3" strokeLinecap="round" /></>, false],
  ["tasks", <><rect x="8" y="1" width="22" height="20" fill="#efefef" /><rect x="0" y="9" width="22" height="20" fill="#6a6d70" opacity=".85" /><rect x="8" y="9" width="14" height="12" fill="#b0b2b4" /></>, false],
  ["weather", <><path d="M6 22a6 6 0 0 1 0-11 8 8 0 0 1 14-2 7 7 0 0 1 4 13z" fill="#d9e4f5" /><circle cx="25" cy="5" r="10.500" fill="#2b2d30" /><text x="16.500" y="9" fontSize="14" fill="#fff" fontFamily="Open Sans" textLength="19" lengthAdjust="spacingAndGlyphs">26°</text></>, false],
  ["chat", <><defs><linearGradient id="ch" x2="1" y2="1"><stop offset="0" stopColor="#a78bd8" /><stop offset="1" stopColor="#5257cf" /></linearGradient></defs><path d="M15 1a14 14 0 1 1-6 26.500L2 29l1-7A14 14 0 0 1 15 1z" fill="url(#ch)" /><rect x="7" y="9" width="11.500" height="12" rx="2" fill="#fff" /><path d="m19.500 13 4-3v10l-4-3z" fill="#fff" /></>, false],
  ["edge", <><defs><linearGradient id="ed" x2="1"><stop offset="0" stopColor="#1590df" /><stop offset=".6" stopColor="#35c1d0" /><stop offset="1" stopColor="#62dc58" /></linearGradient></defs><path d="M15 0a15 15 0 0 0-15 15 15 15 0 0 0 20 14c4-1 6-4 7-6-6 3-10 1-11-3l14-3A15 15 0 0 0 15 0z" fill="#1171c4" /><path d="M0 14A15 15 0 0 1 30 14c0 5-4 7-8 7-3 0-5-1-4-3 2-5-2-9-7-9-6 0-10 3-11 5z" fill="url(#ed)" /><path d="M12 14c-3 5 0 12 7 13 4 0 7-2 9-4-3 5-8 7-13 7-7-1-10-10-3-16z" fill="#0b4a94" /></>, true],
  ["chrome", <><path d="M15 15 2 7.500A15 15 0 0 1 28 7.500H15z" fill="#e33b2e" /><path d="M15 15 28 7.500A15 15 0 0 1 15 30l6.500-11z" fill="#fbc116" /><path d="M2 7.500A15 15 0 0 0 15 30l6.500-11.500-13 0z" fill="#269947" /><circle cx="15" cy="15" r="7" fill="#fff" /><circle cx="15" cy="15" r="5.500" fill="#2f7de8" /></>, true],
  ["files", <><path d="M0 3h11l3 3h15v8H0z" fill="#d99a1c" /><path d="M0 8h30v20H0z" fill="#ffd04c" /><path d="M5 28v-6a2 2 0 0 1 2-2h16a2 2 0 0 1 2 2v6z" fill="#1474c4" /><path d="M9 24h12" stroke="#0a4f90" strokeWidth="1.500" /></>, true],
  ["store", <><path d="M9 6V1h12v5" fill="none" stroke="#2fa8e8" strokeWidth="2.200" /><rect x="1" y="5" width="28" height="25" rx="3" fill="#f3f3f3" /><path d="M9 12h5.500v5.500H9z" fill="#f25022" /><path d="M15.500 12H21v5.500h-5.500z" fill="#7fba00" /><path d="M9 18.500h5.500V24H9z" fill="#00a4ef" /><path d="M15.500 18.500H21V24h-5.500z" fill="#ffb900" /></>, false],
  ["word", <><rect width="30" height="30" fill="#7b7b7b" /><rect x="9" y="7" width="16" height="17" fill="#2b7cd3" /><path d="M9 15h16v9H9z" fill="#103f91" /><rect x="5" y="10" width="11" height="11" fill="#185abd" /><text x="6" y="19" fontSize="9" fontWeight="700" fill="#fff" fontFamily="Open Sans">W</text></>, false],
  ["outlook", <><rect x="9" y="2" width="14" height="20" fill="#1068b8" /><path d="M7 14l22 2v12H7z" fill="#30a4ea" /><path d="M7 28 29 16v12z" fill="#1b86d8" /><rect x="0" y="8" width="15" height="15" rx="1.500" fill="#0f6cbd" /><text x="2.500" y="20" fontSize="13" fontWeight="700" fill="#fff" fontFamily="Open Sans">O</text><circle cx="26" cy="4" r="10" fill="#52c0f2" /><path d="M20.500 0h11v8.500h-11zl5.500 5 5.500-5" fill="none" stroke="#14303c" strokeWidth="1.300" /></>, true],
  ["onefolder", <><path d="M5 2h17v22H5z" fill="#e6b940" /><path d="M5 2h7l3 3v24L5 26z" fill="#ffe08a" /><path d="M13 27a3.500 3.500 0 0 1 2-6 5 5 0 0 1 9-1 4 4 0 0 1 4 7z" fill="#1585dd" /></>, false],
  ["photos", <><rect x="1" y="1" width="28" height="28" fill="#2c8fe8" /><rect x="1" y="1" width="28" height="14" fill="#35a5ee" /><path d="m18 17 6-5 5 5v12H15z" fill="#7f88e8" /><path d="m1 20 9-9 15 18H1z" fill="#164f96" /><circle cx="20" cy="7" r="2.500" fill="#fff" /></>, true],
  ["slack", <><circle cx="15" cy="15" r="14.500" fill="#fff" /><g transform="translate(4.500 4.500) scale(1.050)">{slackPaths}</g><circle cx="26" cy="4" r="8" fill="#d81e4c" /><text x="22.500" y="9" fontSize="13.500" fill="#fff" fontFamily="Open Sans">1</text></>, true],
  ["ppt", <><circle cx="16" cy="15" r="14" fill="#d35230" /><path d="M16 1a14 14 0 0 1 14 14H16z" fill="#ff8f6b" /><path d="M16 1v14H2A14 14 0 0 1 16 1z" fill="#ed6c47" /><rect x="0" y="7" width="15" height="16" rx="1.500" fill="#c43e1c" /><text x="3.500" y="19.500" fontSize="12" fontWeight="700" fill="#fff" fontFamily="Open Sans">P</text></>, true],
  ["pdf", <><path d="M0 0h23l7 7v23H0z" fill="#f68a1f" /><path d="M22 0v7h8" fill="#222" /><path d="M23 1v5h6z" fill="#f68a1f" /><path d="M21 5C12 3 7 8 7 13c0 5 4 8 8 8s7-3 6-7l-4 4c-4 0-5-3-4-6s4-5 8-7z" fill="#fff" /><text x="8.500" y="28" fontSize="6.500" fontWeight="700" fill="#fff" fontFamily="Open Sans">PDF</text></>, true],
  ["teams", <><circle cx="17" cy="6" r="5" fill="#7b83eb" /><path d="M10 12h14v10a7 7 0 0 1-14 4z" fill="#7b83eb" /><path d="M24 12h6v8a5 5 0 0 1-6 4z" fill="#5059c9" /><rect x="0" y="7" width="15" height="16" rx="1.500" fill="#4b53bc" /><text x="4" y="19.500" fontSize="12" fontWeight="700" fill="#fff" fontFamily="Open Sans">T</text><circle cx="28.500" cy="5" r="6.500" fill="#fff" /><circle cx="28.500" cy="5" r="5.800" fill="#f5c518" /><path d="M28.500 1.500v4l2 2" stroke="#fff" strokeWidth="1.500" fill="none" /></>, true],
];

function Taskbar() {
  return (
    <div className="flex h-[61px] border-t-2 border-white bg-gradient-to-r from-[#1e2934] from-10% via-[#10214f] via-50% to-[#1c2a35] to-85% pl-[13.500px] text-white">
      {apps.map(([k, art, run]) => (
        <div key={k} className="flex w-[55.050px] shrink-0 justify-center pt-[4px]">
          <div className={"flex h-[50px] w-[49px] flex-col items-center rounded-md pt-[10px] " + (k === "chrome" ? "border border-[#36455c] bg-[#24344a] pt-[9px]" : "")}>
            <svg viewBox="0 0 30 30" className="block size-[30px] shrink-0 overflow-visible">{art}</svg>
            {run && <div className={"mt-[5px] h-1 shrink-0 rounded-full " + (k === "chrome" ? "w-5 bg-[#1f8fff]" : "w-2 bg-[#98a0b0]")} />}
          </div>
        </div>
      ))}
      <div className="ml-auto flex h-[58px] items-center pr-[24px]">
        <Svg c="h-[10px] w-[17px]" vb="0 0 17 10"><path d="m1 9 7.500-7.500L16 9" fill="none" stroke="#fff" strokeWidth="1.400" /></Svg>
        <Svg c="ml-[11px] h-[14px] w-[20px]" vb="0 0 20 14"><path d="M4 13a4 4 0 0 1-1-7.500A6 6 0 0 1 14 4a4.500 4.500 0 0 1 3 9z" fill="#1583d8" /><path d="M3 13c3-7 9-7 13-6.500a3.500 3.500 0 0 1 1 6.500z" fill="#3bb0f2" /></Svg>
        <div className="ml-[18px] flex flex-col items-center text-[14.500px] leading-5">
          <Fit className="w-[29px]">ENG</Fit>
          <Fit className="w-[15px]">IN</Fit>
        </div>
        <Svg c="ml-[22px] h-4 w-[21px]" vb="0 0 21 16"><g fill="none" stroke="#fff" strokeWidth="1.500"><path d="M1 6.500a13 13 0 0 1 19 0M4 9.500a9 9 0 0 1 13 0M7 12.300a5 5 0 0 1 7 0" /></g><circle cx="10.500" cy="14" r="1.700" fill="#fff" /></Svg>
        <Svg c="ml-[9px] h-4 w-[21px]" vb="0 0 21 16"><path d="M1 5.500h3l4-4v13l-4-4H1z" fill="none" stroke="#fff" strokeWidth="1.300" /><path d="M10.500 5a4 4 0 0 1 0 6M13 3a7 7 0 0 1 0 10" fill="none" stroke="#fff" strokeWidth="1.300" /><path d="M15.500 1a10 10 0 0 1 0 14" fill="none" stroke="#777" /></Svg>
        <Svg c="ml-[9px] h-4 w-[21px]" vb="0 0 21 16"><rect x="4" y="3.500" width="14" height="11" rx="2" fill="none" stroke="#fff" strokeWidth="1.500" /><path d="M19 7v4" stroke="#fff" strokeWidth="2" /><path d="M8 6h8v6H6V8z" fill="#fff" /><path d="M1 2h5v4a2.500 2.500 0 0 1-5 0zM3.500 8v7M2 0v3M5 0v3" stroke="#fff" fill="#fff" /></Svg>
        <div className="ml-[18px] flex flex-col items-end text-[14.500px] leading-5">
          <Fit className="w-[52px]">6:18 PM</Fit>
          <Fit className="w-[73px]">06-Aug-22</Fit>
        </div>
        <div className="ml-[15px] flex size-5 items-center justify-center rounded-full bg-[#0b8ffb] text-[12px] text-[#06203c]">1</div>
      </div>
    </div>
  );
}

export default function App() {
  return (
    <div className={"flex h-[1080px] w-[1920px] flex-col overflow-hidden bg-white " + UI}>
      <TabStrip />
      <AddressBar />
      <Bookmarks />
      <Panel />
      <TitleBar />
      <MenuBar />
      <Magic />
      <Desktop />
      <Taskbar />
    </div>
  );
}
